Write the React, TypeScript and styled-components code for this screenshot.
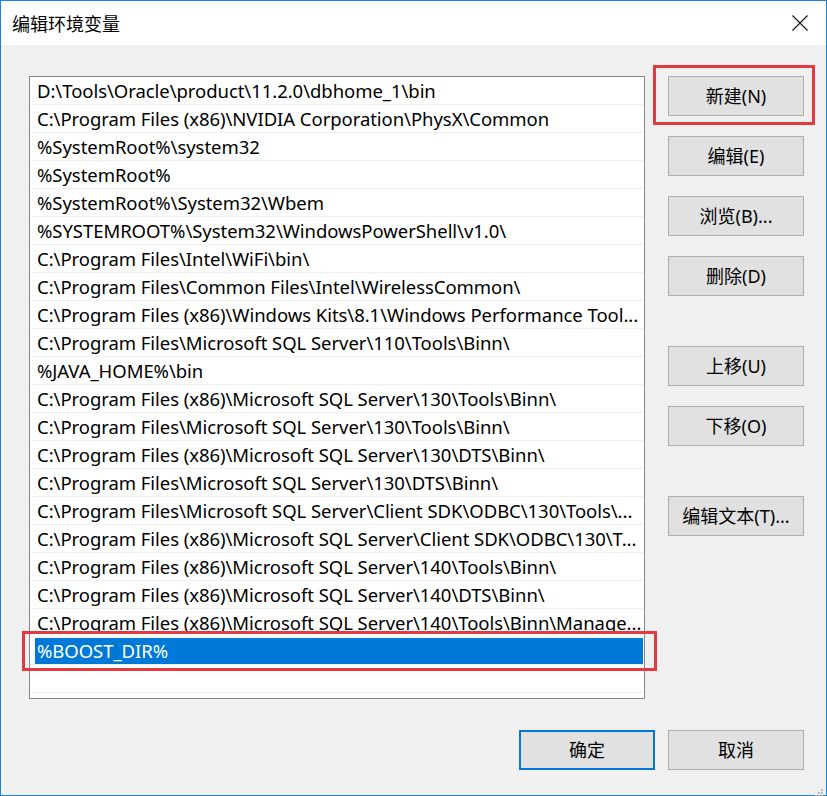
import React from "react";
import styled, { createGlobalStyle } from "styled-components";

const Global = createGlobalStyle`
  html, body { margin: 0; padding: 0; background: #ffffff; }
  * { box-sizing: border-box; }
`;

const FONT = `"Noto Sans", "Noto Sans CJK SC", sans-serif`;

const Window = styled.div`
  width: 827px;
  height: 796px;
  border: 1px solid #1a82d8;
  background: #f0f0f0;
  display: flex;
  flex-direction: column;
  font-family: ${FONT};
  color: #000;
  position: relative;
`;

const TitleBar = styled.div`
  height: 44px;
  background: #ffffff;
  display: flex;
  align-items: center;
  justify-content: space-between;
  padding: 0 10px 0 11px;
  flex-shrink: 0;
`;

const Title = styled.div`
  font-family: "Noto Sans CJK SC", sans-serif;
  font-size: 18px;
  line-height: 1;
  margin-top: -1px;
`;

const CloseBtn = styled.div`
  width: 32px;
  height: 32px;
  display: flex;
  align-items: center;
  justify-content: center;
`;

const Body = styled.div`
  flex: 1;
  display: flex;
  flex-direction: column;
  padding: 31px 22px 0 28px;
`;

const Main = styled.div`
  display: flex;
  gap: 23px;
`;

const ListBox = styled.div`
  width: 616px;
  height: 623px;
  border: 1px solid #828790;
  background: #fff;
  display: flex;
  flex-direction: column;
`;

const Row = styled.div`
  height: 28px;
  flex-shrink: 0;
  border-bottom: 1px solid #f0f0f0;
  position: relative;
  display: flex;
  align-items: center;
  padding: 0 1px 0 5px;
`;

const RowText = styled.div<{ $selected?: boolean }>`
  flex: 1;
  height: 26px;
  margin-top: 1px;
  display: flex;
  align-items: center;
  padding: 0 0 2px 2px;
  white-space: nowrap;
  overflow: hidden;
  font-size: 18.5px;
  letter-spacing: -0.05px;
  color: ${(p) => (p.$selected ? "#fff" : "#000")};
  background: ${(p) => (p.$selected ? "#0078d7" : "transparent")};
`;

const Highlight = styled.div<{ $t: number; $r: number; $b: number; $l: number }>`
  position: absolute;
  top: ${(p) => p.$t}px;
  right: ${(p) => p.$r}px;
  bottom: ${(p) => p.$b}px;
  left: ${(p) => p.$l}px;
  border: 3px solid #e5383f;
  pointer-events: none;
`;

const Side = styled.div`
  display: flex;
  flex-direction: column;
`;

const Button = styled.div<{ $gapTop?: number; $default?: boolean }>`
  position: relative;
  width: 136px;
  height: 40px;
  margin-top: ${(p) => p.$gapTop ?? 0}px;
  background: #e1e1e1;
  border: ${(p) => (p.$default ? "2px solid #0078d7" : "1px solid #adadad")};
  display: flex;
  align-items: center;
  justify-content: center;
  padding-bottom: 2px;
  font-family: ${FONT};
  font-size: 18px;
  white-space: nowrap;
`;

const Footer = styled.div`
  display: flex;
  justify-content: flex-end;
  gap: 13px;
  margin-top: 31px;
`;

const Grip = styled.div`
  position: absolute;
  right: 2px;
  bottom: 2px;
  width: 12px;
  height: 12px;
`;

const items = [
  "D:\\Tools\\Oracle\\product\\11.2.0\\dbhome_1\\bin",
  "C:\\Program Files (x86)\\NVIDIA Corporation\\PhysX\\Common",
  "%SystemRoot%\\system32",
  "%SystemRoot%",
  "%SystemRoot%\\System32\\Wbem",
  "%SYSTEMROOT%\\System32\\WindowsPowerShell\\v1.0\\",
  "C:\\Program Files\\Intel\\WiFi\\bin\\",
  "C:\\Program Files\\Common Files\\Intel\\WirelessCommon\\",
  "C:\\Program Files (x86)\\Windows Kits\\8.1\\Windows Performance Tool...",
  "C:\\Program Files\\Microsoft SQL Server\\110\\Tools\\Binn\\",
  "%JAVA_HOME%\\bin",
  "C:\\Program Files (x86)\\Microsoft SQL Server\\130\\Tools\\Binn\\",
  "C:\\Program Files\\Microsoft SQL Server\\130\\Tools\\Binn\\",
  "C:\\Program Files (x86)\\Microsoft SQL Server\\130\\DTS\\Binn\\",
  "C:\\Program Files\\Microsoft SQL Server\\130\\DTS\\Binn\\",
  "C:\\Program Files\\Microsoft SQL Server\\Client SDK\\ODBC\\130\\Tools\\...",
  "C:\\Program Files (x86)\\Microsoft SQL Server\\Client SDK\\ODBC\\130\\T...",
  "C:\\Program Files (x86)\\Microsoft SQL Server\\140\\Tools\\Binn\\",
  "C:\\Program Files (x86)\\Microsoft SQL Server\\140\\DTS\\Binn\\",
  "C:\\Program Files (x86)\\Microsoft SQL Server\\140\\Tools\\Binn\\Manage...",
  "%BOOST_DIR%",
  "",
];

const SELECTED = 20;

export default function App() {
  return (
    <>
      <Global />
      <Window>
        <TitleBar>
          <Title>编辑环境变量</Title>
          <CloseBtn>
            <svg width="16" height="16" viewBox="0 0 16 16">
              <path d="M0.5 0.5 L15.5 15.5 M15.5 0.5 L0.5 15.5" stroke="#111" strokeWidth="1.1" fill="none" />
            </svg>
          </CloseBtn>
        </TitleBar>
        <Body>
          <Main>
            <ListBox>
              {items.map((t, i) => (
                <Row key={i}>
                  <RowText $selected={i === SELECTED}>{t}</RowText>
                  {i === SELECTED && <Highlight $t={-6} $r={-13} $b={-7} $l={-8} />}
                </Row>
              ))}
            </ListBox>
            <Side>
              <Button>
                新建(N)
                <Highlight $t={-12} $r={-12} $b={-10} $l={-16} />
              </Button>
              <Button $gapTop={20}>编辑(E)</Button>
              <Button $gapTop={20}>浏览(B)...</Button>
              <Button $gapTop={20}>删除(D)</Button>
              <Button $gapTop={50}>上移(U)</Button>
              <Button $gapTop={20}>下移(O)</Button>
              <Button $gapTop={50}>编辑文本(T)...</Button>
            </Side>
          </Main>
          <Footer>
            <Button $default>确定</Button>
            <Button>取消</Button>
          </Footer>
        </Body>
        <Grip>
          <svg width="12" height="12" viewBox="0 0 12 12">
            {[
              [9, 1],
              [6, 4],
              [9, 4],
              [3, 7],
              [6, 7],
              [9, 7],
            ].map(([x, y], k) => (
              <rect key={k} x={x} y={y + 2} width="2" height="2" fill="#b8b8b8" />
            ))}
          </svg>
        </Grip>
      </Window>
    </>
  );
}
